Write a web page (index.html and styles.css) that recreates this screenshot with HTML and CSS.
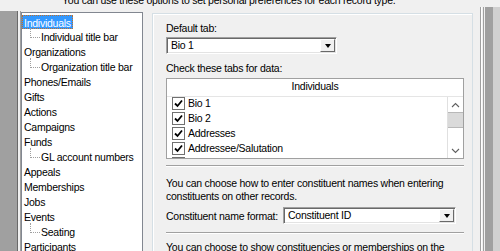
FILE: index.html
```html
<!DOCTYPE html>
<html lang="en">
<head>
    <meta charset="UTF-8">
    <title>Record Type Preferences</title>
    <link rel="stylesheet" href="styles.css">
</head>
<body>
    <p class="intro">You can use these options to set personal preferences for each record type.</p>

    <div class="layout">
        <div class="edge-left"></div>

        <ul class="tree">
            <li class="selected"><span>Individuals</span></li>
            <li class="child"><span>Individual title bar</span></li>
            <li><span>Organizations</span></li>
            <li class="child"><span>Organization title bar</span></li>
            <li><span>Phones/Emails</span></li>
            <li><span>Gifts</span></li>
            <li><span>Actions</span></li>
            <li><span>Campaigns</span></li>
            <li><span>Funds</span></li>
            <li class="child"><span>GL account numbers</span></li>
            <li><span>Appeals</span></li>
            <li><span>Memberships</span></li>
            <li><span>Jobs</span></li>
            <li><span>Events</span></li>
            <li class="child"><span>Seating</span></li>
            <li><span>Participants</span></li>
        </ul>

        <div class="prefs">
            <div class="label">Default tab:</div>
            <div class="combo combo-tab">
                <div class="combo-value">Bio 1</div>
                <div class="combo-btn"></div>
            </div>

            <div class="label label-tabs">Check these tabs for data:</div>
            <div class="tab-list">
                <div class="tab-list-head">Individuals</div>
                <div class="tab-list-body">
                    <div class="tab-rows">
                        <div class="tab-row"><span class="check on"></span>Bio 1</div>
                        <div class="tab-row"><span class="check on"></span>Bio 2</div>
                        <div class="tab-row"><span class="check on"></span>Addresses</div>
                        <div class="tab-row"><span class="check on"></span>Addressee/Salutation</div>
                        <div class="tab-row"><span class="check"></span></div>
                    </div>
                    <div class="scrollbar">
                        <div class="sb-btn">
                            <svg width="9" height="6" viewBox="0 0 9 6"><path d="M1 5 L4.5 1.5 L8 5" fill="none" stroke="#606060" stroke-width="1.1"/></svg>
                        </div>
                        <div class="sb-thumb"></div>
                        <div class="sb-track"></div>
                        <div class="sb-btn">
                            <svg width="9" height="6" viewBox="0 0 9 6"><path d="M1 1 L4.5 4.5 L8 1" fill="none" stroke="#606060" stroke-width="1.1"/></svg>
                        </div>
                    </div>
                </div>
            </div>

            <div class="rule"></div>

            <p class="note">You can choose how to enter constituent names when entering constituents on other records.</p>
            <div class="name-row">
                <div class="name-label">Constituent name format:</div>
                <div class="combo combo-name">
                    <div class="combo-value">Constituent ID</div>
                    <div class="combo-btn"></div>
                </div>
            </div>

            <div class="rule rule-lower"></div>

            <p class="note note-last">You can choose to show constituencies or memberships on the</p>
        </div>

        <div class="edge-right"></div>
    </div>
</body>
</html>
```

FILE: styles.css
```css
* {
    box-sizing: border-box;
}
body {
    margin: 0;
    width: 500px;
    height: 251px;
    overflow: hidden;
    background: #f0f0f0;
    font-family: "Liberation Sans", Arial, sans-serif;
    font-size: 10.5px;
    letter-spacing: -0.25px;
    color: #000;
}
.intro {
    margin: -6px 0 0 62px;
    line-height: 13px;
    white-space: nowrap;
}
.layout {
    display: flex;
    align-items: flex-start;
    height: 244px;
}
.edge-left {
    width: 21px;
    align-self: stretch;
    margin-top: 4px;
    background: linear-gradient(to right, #a0a0a0 0 17px, #696969 17px 18px, #f0f0f0 18px 20px, #a0a0a0 20px);
}

/* tree of record types */
.tree {
    width: 122px;
    margin: 5px 0 0 0;
    padding: 2px 0 0 0;
    align-self: stretch;
    list-style: none;
    background: #fff;
    border: 1px solid #828790;
    border-bottom: none;
}
.tree li {
    position: relative;
    height: 15px;
    line-height: 15px;
    white-space: nowrap;
}
.tree li span {
    padding: 0 2px;
}
.tree .child {
    padding-left: 17px;
}
.tree .child::before {
    content: "";
    position: absolute;
    left: 8px;
    top: -2px;
    width: 9px;
    height: 9px;
    border-left: 1px dotted #a0a0a0;
    border-bottom: 1px dotted #a0a0a0;
}
.tree .selected span {
    display: inline-block;
    line-height: 12px;
    padding: 2px 2px 0;
    background: #3399ff;
    color: #fff;
    outline: 1px dotted #c0702a;
    outline-offset: -1px;
}

/* preferences group */
.prefs {
    width: 321px;
    margin: 6px 0 0 9px;
    padding: 8px 7px 0 13px;
    align-self: stretch;
    border: 1px solid #d5dfe5;
    border-bottom: none;
    box-shadow: inset 1px 1px #fff;
}
.label {
    line-height: 13px;
}
.label-tabs {
    margin-top: 8px;
}
.combo {
    display: flex;
    height: 17px;
    background: #fff;
    border: 1px solid;
    border-color: #a0a0a0 #fff #fff #a0a0a0;
    box-shadow: inset 1px 1px #696969, inset -1px -1px #e3e3e3;
}
.combo-tab {
    width: 171px;
    margin-top: 2px;
}
.combo-name {
    width: 173px;
}
.combo-value {
    flex: 1;
    padding-left: 4px;
    line-height: 15px;
}
.combo-btn {
    width: 15px;
    margin: 1px 1px 1px 0;
    display: flex;
    align-items: center;
    justify-content: center;
    background: #f0f0f0;
    border: 1px solid;
    border-color: #fff #696969 #696969 #fff;
}
.combo-btn::after {
    content: "";
    border-left: 3.5px solid transparent;
    border-right: 3.5px solid transparent;
    border-top: 4px solid #000;
}

/* tab check list */
.tab-list {
    width: 298px;
    height: 81px;
    margin-top: 3px;
    background: #fff;
    border: 1px solid #a0a0a0;
}
.tab-list-head {
    line-height: 15px;
    padding-bottom: 2px;
    text-align: center;
    border-bottom: 1px solid #e5e5e5;
}
.tab-list-body {
    display: flex;
    height: 61px;
    overflow: hidden;
}
.tab-rows {
    flex: 1;
}
.tab-row {
    display: flex;
    align-items: flex-start;
    gap: 3px;
    height: 15px;
    padding-left: 5px;
    line-height: 12px;
    white-space: nowrap;
}
.check {
    width: 13px;
    height: 13px;
    flex: none;
    border: 1px solid #707070;
    background: #fff;
}
.check.on {
    background: #fff url("data:image/svg+xml,%3Csvg xmlns='http://www.w3.org/2000/svg' width='11' height='11'%3E%3Cpath d='M2 5.5 L4.5 8 L9 2.5' fill='none' stroke='%23000' stroke-width='1.8'/%3E%3C/svg%3E") no-repeat center;
}
.scrollbar {
    width: 16px;
    display: flex;
    flex-direction: column;
    border-left: 1px solid #e0e0e0;
}
.sb-btn {
    height: 15px;
    display: flex;
    align-items: center;
    justify-content: center;
}
.sb-thumb {
    height: 16px;
    background: #dadada;
    border-top: 1px solid #b8b8b8;
    border-bottom: 1px solid #b8b8b8;
}
.sb-track {
    height: 15px;
}

.rule {
    width: 298px;
    height: 2px;
    margin-top: 6px;
    border-top: 1px solid #a0a0a0;
    border-bottom: 1px solid #fff;
}
.rule-lower {
    margin-top: 8px;
}
.note {
    margin: 10px 0 0 0;
    line-height: 13px;
}
.note-last {
    margin-top: 7px;
    white-space: nowrap;
}
.name-row {
    display: flex;
    align-items: center;
    margin-top: 4px;
}
.name-label {
    width: 117px;
    flex: none;
}

.edge-right {
    flex: 1;
    align-self: stretch;
    margin-left: 7px;
    background: linear-gradient(to right, #a0a0a0 0 1px, #fff 1px 2px, #f0f0f0 2px 3px, #a0a0a0 3px 4px, #f0f0f0 4px 5px, #a0a0a0 5px 13px, #d0d0d0 13px);
}
```
